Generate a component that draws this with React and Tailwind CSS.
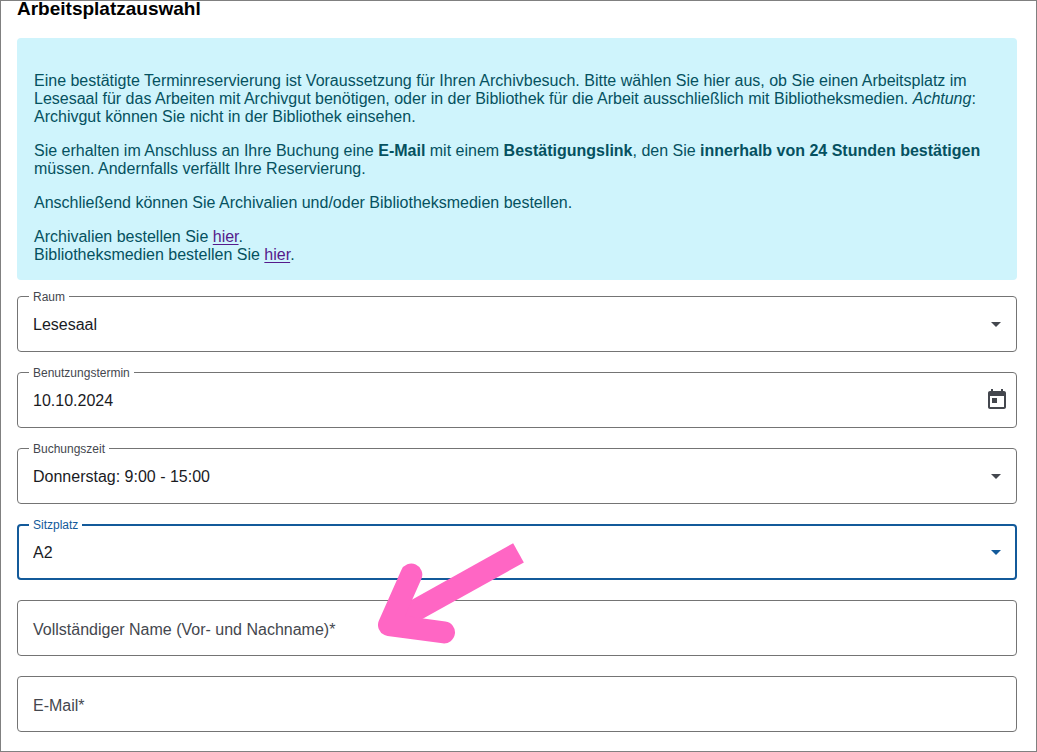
import { useState } from "react";

const focusedFrame = "border-2 border-[#135a9a] text-[#135a9a]";
const idleFrame = "border border-[#747474] text-[#44474e]";

function OutlinedField({ id, label, focused = false, children }) {
  return (
    <fieldset className={`min-w-0 rounded ${focused ? focusedFrame : idleFrame}`}>
      <legend className={`h-0 px-1 text-xs leading-[0px] ${focused ? "ml-[10px]" : "ml-[11px]"}`}>
        <label htmlFor={id}>{label}</label>
      </legend>
      {children}
    </fieldset>
  );
}

function SelectField({ id, label, options, focused = false }) {
  return (
    <OutlinedField id={id} label={label} focused={focused}>
      <div className="grid items-center">
        <select
          id={id}
          className={`col-start-1 row-start-1 w-full appearance-none bg-transparent pt-0.5 pr-10 text-base text-[#1a1b1f] outline-none ${
            focused ? "h-[52px] pl-[14px]" : "h-[54px] pl-[15px]"
          }`}
        >
          {options.map((option) => (
            <option key={option}>{option}</option>
          ))}
        </select>
        <svg
          viewBox="0 0 24 24"
          aria-hidden="true"
          className={`pointer-events-none col-start-1 row-start-1 size-6 justify-self-end fill-current ${
            focused ? "mr-[7px]" : "mr-2"
          }`}
        >
          <path d="M7 10l5 5 5-5z" />
        </svg>
      </div>
    </OutlinedField>
  );
}

function DateField({ id, label, initial }) {
  const [value, setValue] = useState(initial);
  return (
    <OutlinedField id={id} label={label}>
      <div className="flex items-center pr-[7px]">
        <input
          id={id}
          type="text"
          value={value}
          onChange={(event) => setValue(event.target.value)}
          className="h-[54px] min-w-0 flex-1 bg-transparent pt-0.5 pl-[15px] text-base text-[#1a1b1f] outline-none"
        />
        <button type="button" aria-label="Kalender öffnen" className="size-6">
          <svg viewBox="0 0 24 24" aria-hidden="true" className="size-6 fill-current">
            <path d="M19 3h-1V1h-2v2H8V1H6v2H5c-1.11 0-1.99.9-1.99 2L3 19c0 1.1.89 2 2 2h14c1.1 0 2-.9 2-2V5c0-1.1-.9-2-2-2zm0 16H5V8h14v11zM7 10h5v5H7z" />
          </svg>
        </button>
      </div>
    </OutlinedField>
  );
}

function TextField({ id, label, type = "text", children }) {
  return (
    <div className="relative grid items-center rounded border border-[#747474]">
      <input
        id={id}
        type={type}
        required
        placeholder=" "
        className="peer col-start-1 row-start-1 h-[54px] w-full bg-transparent px-[15px] pt-0.5 text-base text-[#1a1b1f] outline-none"
      />
      <label
        htmlFor={id}
        className="invisible col-start-1 row-start-1 justify-self-start px-[15px] pt-1 text-base text-[#44474e] peer-placeholder-shown:visible"
      >
        {label}*
      </label>
      {children}
    </div>
  );
}

function PointerArrow() {
  return (
    <svg
      viewBox="378 543 146 101"
      aria-hidden="true"
      className="pointer-events-none absolute -top-[58px] left-[360px] h-[101px] w-[146px] fill-none stroke-[#ff66c4]"
      strokeWidth="22"
    >
      <path d="M518.5 552.8L389 625" />
      <path d="M411.3 574.6L389 625L444 632.4" strokeLinecap="round" strokeLinejoin="round" />
    </svg>
  );
}

function InfoBox() {
  const link = "text-[#551a8b] underline underline-offset-2";
  return (
    <section className="mt-[21px] flex flex-col gap-4 rounded bg-[#cff4fc] px-[17px] pt-[34px] pb-4 text-base leading-[18px] text-[#055160]">
      <p>
        Eine bestätigte Terminreservierung ist Voraussetzung für Ihren Archivbesuch. Bitte wählen Sie hier aus, ob
        Sie einen Arbeitsplatz im Lesesaal für das Arbeiten mit Archivgut benötigen, oder in der Bibliothek für die
        Arbeit ausschließlich mit Bibliotheksmedien. <em>Achtung</em>: Archivgut können Sie nicht in der Bibliothek
        einsehen.
      </p>
      <p>
        Sie erhalten im Anschluss an Ihre Buchung eine <strong>E-Mail</strong> mit einem{" "}
        <strong>Bestätigungslink</strong>, den Sie <strong>innerhalb von 24 Stunden bestätigen</strong> müssen.
        Andernfalls verfällt Ihre Reservierung.
      </p>
      <p>Anschließend können Sie Archivalien und/oder Bibliotheksmedien bestellen.</p>
      <p>
        Archivalien bestellen Sie <a href="#archivalien" className={link}>hier</a>.
        <br />
        Bibliotheksmedien bestellen Sie <a href="#bibliothek" className={link}>hier</a>.
      </p>
    </section>
  );
}

export default function App() {
  return (
    <main className="overflow-hidden border border-[#808080] bg-white pr-[19px] pb-[19px] pl-4 font-['Liberation_Sans',Arial,sans-serif]">
      <h3 className="text-[19px] leading-4 font-bold text-black">Arbeitsplatzauswahl</h3>
      <InfoBox />
      <form className="mt-4 flex flex-col gap-5">
        <SelectField id="raum" label="Raum" options={["Lesesaal", "Bibliothek"]} />
        <DateField id="termin" label="Benutzungstermin" initial="10.10.2024" />
        <SelectField id="zeit" label="Buchungszeit" options={["Donnerstag: 9:00 - 15:00"]} />
        <SelectField id="platz" label="Sitzplatz" options={["A2"]} focused />
        <TextField id="name" label="Vollständiger Name (Vor- und Nachname)">
          <PointerArrow />
        </TextField>
        <TextField id="email" label="E-Mail" type="email" />
      </form>
    </main>
  );
}
